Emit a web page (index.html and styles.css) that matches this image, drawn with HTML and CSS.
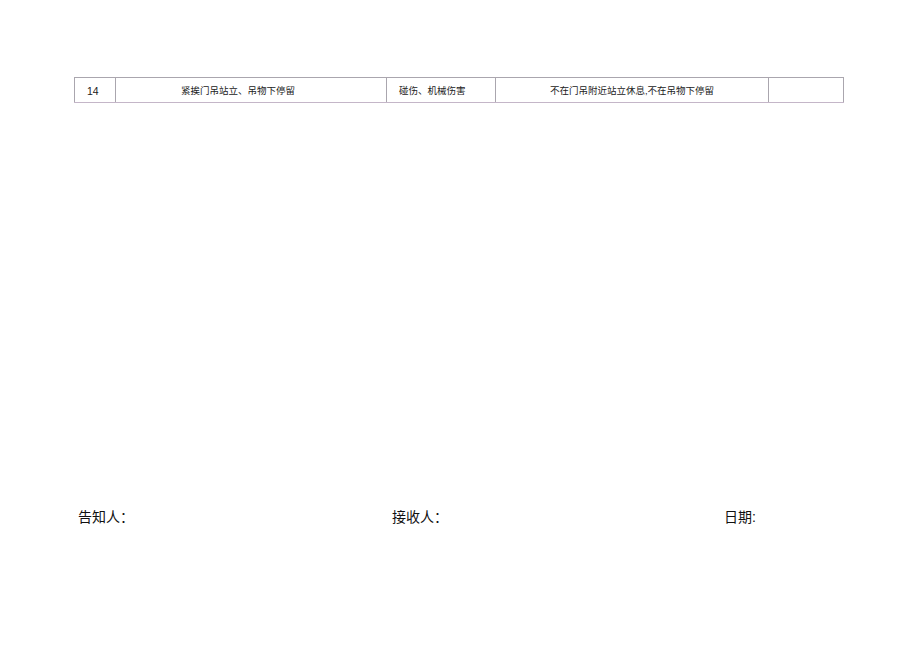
FILE: index.html
```html
<!DOCTYPE html>
<html lang="zh">
<head>
<meta charset="utf-8">
<link rel="stylesheet" href="styles.css">
</head>
<body>
<div class="page">
  <table class="risk">
    <colgroup>
      <col class="c1"><col class="c2"><col class="c3"><col class="c4"><col class="c5">
    </colgroup>
    <tr>
      <td class="left num">14</td>
      <td class="center shift">紧挨门吊站立、吊物下停留</td>
      <td class="left">碰伤、机械伤害</td>
      <td class="center">不在门吊附近站立休息,不在吊物下停留</td>
      <td></td>
    </tr>
  </table>
  <div class="sign">
    <span class="f1">告知人：</span>
    <span class="f2">接收人：</span>
    <span class="f3">日期:</span>
  </div>
</div>
</body>
</html>
```
FILE: styles.css
```css
html, body {
  margin: 0;
  padding: 0;
  background: #ffffff;
}
.page {
  width: 920px;
  height: 650px;
  padding: 77px 0 0 74px;
  box-sizing: border-box;
  font-family: "Liberation Sans", "Noto Sans CJK SC", sans-serif;
  color: #222;
}
.risk {
  border-collapse: collapse;
  table-layout: fixed;
  width: 769px;
}
.c1 { width: 41px; }
.c2 { width: 271px; }
.c3 { width: 109px; }
.c4 { width: 273px; }
.c5 { width: 75px; }
.risk td {
  height: 22px;
  padding: 2px 0 0 0;
  border: 1px solid #aaa6ae;
  font-size: 9.5px;
  line-height: 12px;
  vertical-align: middle;
  white-space: nowrap;
}
.risk tr td {
  border-bottom-color: #c4b6c8;
}
.risk td.left {
  text-align: left;
  padding-left: 12px;
}
.risk td.num {
  font-size: 10.5px;
}
.risk td.center {
  text-align: center;
}
.risk td.shift {
  padding-right: 26px;
}
.sign {
  display: flex;
  margin-top: 405px;
  padding-left: 4px;
  font-size: 14px;
  line-height: 18px;
  color: #111;
}
.f1 { width: 314px; }
.f2 { width: 332px; }
```
